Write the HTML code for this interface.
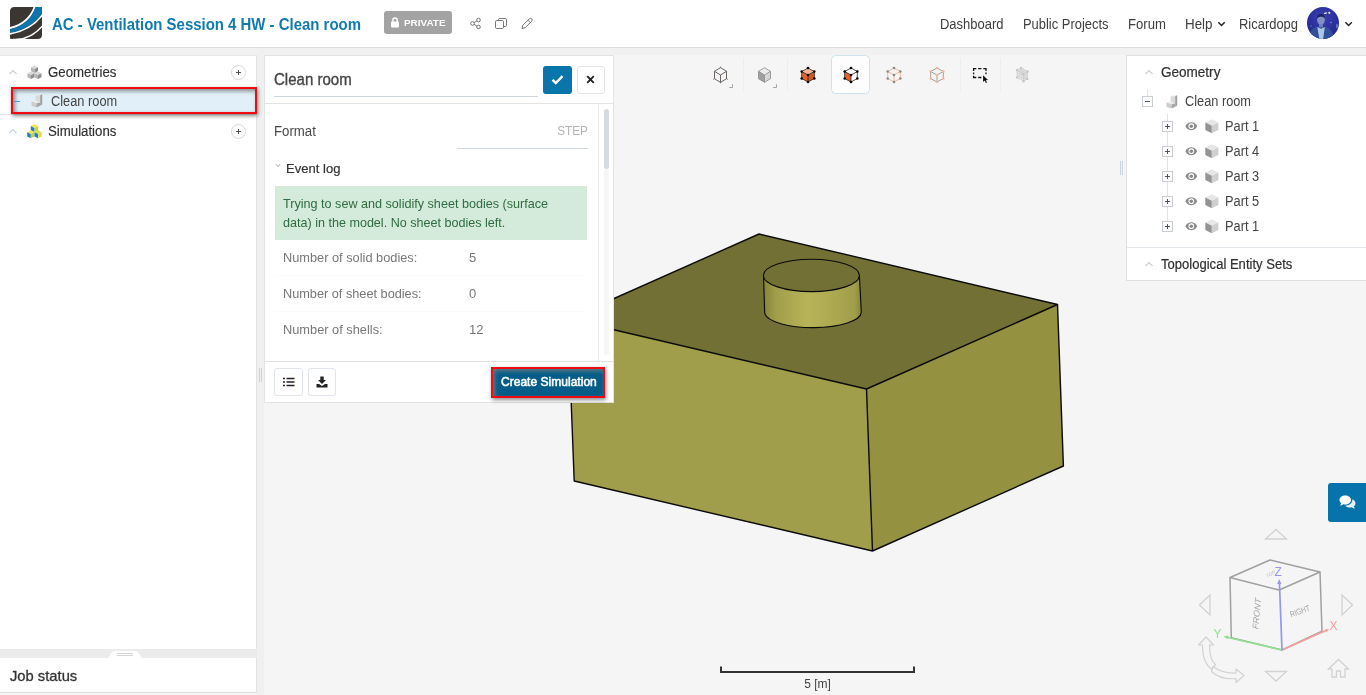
<!DOCTYPE html>
<html>
<head>
<meta charset="utf-8">
<style>
*{box-sizing:border-box;margin:0;padding:0}
html,body{-webkit-font-smoothing:antialiased;width:1366px;height:695px;overflow:hidden;background:#f5f5f5;font-family:"Liberation Sans",sans-serif;color:#3a3a3a}
.abs{position:absolute}
#hdr{position:absolute;left:0;top:0;width:1366px;height:48px;background:#fff;border-bottom:1px solid #dedede}
#title{position:absolute;left:52px;top:14px;font-size:16.200px;font-weight:bold;color:#0f7bb0;white-space:nowrap;line-height:20px}
#priv{position:absolute;left:384px;top:11px;width:68px;height:23px;background:#a3a3a3;border-radius:3px;color:#fff;font-size:9.500px;font-weight:bold;line-height:24px;padding-left:19.500px}
.nav{position:absolute;top:14.500px;font-size:14px;color:#3e3e3e;white-space:nowrap;line-height:18px}
#left{position:absolute;left:0;top:55px;width:257px;height:594px;background:#fff;border-right:1px solid #e2e2e2;border-top:1px solid #e8e8e8}
.t{position:absolute;white-space:nowrap;line-height:18px;display:inline-block}
#job{position:absolute;left:0;top:658px;width:257px;height:34.500px;background:#fff;border-right:1px solid #e2e2e2;border-bottom:1px solid #dcdcdc}
#panel{position:absolute;left:264px;top:55px;width:350px;height:348px;background:#fff;border:1px solid #e3e3e3}
#right{position:absolute;left:1126px;top:55px;width:240px;height:226px;background:#fff;border:1px solid #e0e0e0;border-right:none}
svg{position:absolute;overflow:visible}
.pm{position:absolute;width:11px;height:11px;border:1px solid #c9ced4;background:#fff}
.pm i{position:absolute;background:#555;display:block}
.pm .h{left:2px;top:4px;width:5px;height:1px}
.pm .v{left:4px;top:2px;width:1px;height:5px}
.plus{position:absolute;width:15px;height:15px;border:1px solid #d3d8dd;border-radius:50%;background:#fff}
.plus:before{content:"";position:absolute;left:4px;top:6px;width:5px;height:1px;background:#555}
.plus:after{content:"";position:absolute;left:6px;top:4px;width:1px;height:5px;background:#555}







#title{transform:scaleX(0.9235);transform-origin:left center;display:inline-block}/*cal*/
#tPriv{transform:scaleX(1.0436);transform-origin:left center;display:inline-block}/*cal*/
#nDash{transform:scaleX(0.9270);transform-origin:left center;display:inline-block}/*cal*/
#nPub{transform:scaleX(0.9234);transform-origin:left center;display:inline-block}/*cal*/
#nFor{transform:scaleX(0.9394);transform-origin:left center;display:inline-block}/*cal*/
#nHelp{transform:scaleX(0.9550);transform-origin:left center;display:inline-block}/*cal*/
#nRic{transform:scaleX(0.9244);transform-origin:left center;display:inline-block}/*cal*/
#tGeo{transform:scaleX(0.9453);transform-origin:left center;display:inline-block}/*cal*/
#tCR{transform:scaleX(0.9147);transform-origin:left center;display:inline-block}/*cal*/
#tSim{transform:scaleX(0.9451);transform-origin:left center;display:inline-block}/*cal*/
#tPT{transform:scaleX(0.9395);transform-origin:left center;display:inline-block}/*cal*/
#tFmt{transform:scaleX(0.9449);transform-origin:left center;display:inline-block}/*cal*/
#tStep{transform:scaleX(0.9067);transform-origin:right center;display:inline-block}/*cal*/
#tEv{transform:scaleX(0.9663);transform-origin:left center;display:inline-block}/*cal*/
#tG1{transform:scaleX(0.9697);transform-origin:left center;display:inline-block}/*cal*/
#tG2{transform:scaleX(0.9673);transform-origin:left center;display:inline-block}/*cal*/
#tN1{transform:scaleX(0.9833);transform-origin:left center;display:inline-block}/*cal*/
#tN2{transform:scaleX(0.9785);transform-origin:left center;display:inline-block}/*cal*/
#tN3{transform:scaleX(0.9846);transform-origin:left center;display:inline-block}/*cal*/
#tCS{transform:scaleX(0.9642);transform-origin:left center;display:inline-block}/*cal*/
#tRG{transform:scaleX(0.9663);transform-origin:left center;display:inline-block}/*cal*/
#tRC{transform:scaleX(0.9119);transform-origin:left center;display:inline-block}/*cal*/
#tP0{transform:scaleX(0.9154);transform-origin:left center;display:inline-block}/*cal*/
#tP1{transform:scaleX(0.9154);transform-origin:left center;display:inline-block}/*cal*/
#tP2{transform:scaleX(0.9154);transform-origin:left center;display:inline-block}/*cal*/
#tP3{transform:scaleX(0.9154);transform-origin:left center;display:inline-block}/*cal*/
#tP4{transform:scaleX(0.9154);transform-origin:left center;display:inline-block}/*cal*/
#tRT{transform:scaleX(0.9321);transform-origin:left center;display:inline-block}/*cal*/
#tJob{transform:scaleX(0.9828);transform-origin:left center;display:inline-block}/*cal*/
</style>
</head>
<body>
<div id="root" style="position:absolute;left:0;top:0;width:1366px;height:695px;will-change:transform;transform:translateZ(0)">
<!-- VIEWPORT -->
<svg id="scene" style="left:0;top:0" width="1366" height="695" viewBox="0 0 1366 695">
  <!-- box faces -->
  <polygon points="759,234 1057.5,304.5 866.5,389 568,319" fill="#727034"/>
  <polygon points="568,319 866.5,389 872.5,551 574.2,481" fill="#a09d4b"/>
  <polygon points="866.5,389 1057.5,304.5 1063.4,466 872.5,551" fill="#949241"/>
  <g fill="none" stroke="#0a0a0a" stroke-width="1.4" stroke-linejoin="round">
    <polygon points="759,234 1057.5,304.5 866.5,389 568,319"/>
    <polyline points="568,319 574.2,481 872.5,551 1063.4,466 1057.5,304.5"/>
    <line x1="866.5" y1="389" x2="872.5" y2="551"/>
  </g>
  <!-- cylinder -->
  <defs>
    <linearGradient id="cyl" x1="0" x2="1" y1="0" y2="0">
      <stop offset="0" stop-color="#7f7d37"/><stop offset="0.04" stop-color="#8f8d40"/><stop offset="0.13" stop-color="#a19e4b"/><stop offset="0.3" stop-color="#adaa52"/><stop offset="0.45" stop-color="#b6b358"/><stop offset="0.62" stop-color="#b0ad54"/><stop offset="0.93" stop-color="#a19e4b"/><stop offset="1" stop-color="#88863c"/>
    </linearGradient>
  </defs>
  <path d="M763.500,276 L764.700,313.400 A48.400,15.600 0 0 0 861.300,312.400 L859.400,275.500 Z" fill="url(#cyl)" stroke="#0a0a0a" stroke-width="1.100" stroke-linejoin="round"/>
  <ellipse cx="811.400" cy="275.400" rx="48" ry="16.200" fill="#727034" stroke="#0a0a0a" stroke-width="1.100"/>
  <!-- scale bar -->
  <path d="M721,666.500 V672 H914 V666.500" fill="none" stroke="#333" stroke-width="2"/>
</svg>
<div class="t" id="tScale" style="left:804.200px;top:675px;font-size:12px;color:#444">5 [m]</div>

<svg id="tb" style="left:0;top:0" width="1366" height="110" viewBox="0 0 1366 110">
<rect x="831.500" y="55.500" width="38" height="38" rx="4" fill="#fdfdfd" stroke="#cfe3ee" stroke-width="1"/>
<line x1="743.5" y1="58" x2="743.5" y2="91" stroke="#eeeeee" stroke-width="1"/>
<line x1="787.5" y1="58" x2="787.5" y2="91" stroke="#eeeeee" stroke-width="1"/>
<line x1="960.5" y1="58" x2="960.5" y2="91" stroke="#eeeeee" stroke-width="1"/>
<line x1="1000.5" y1="58" x2="1000.5" y2="91" stroke="#eeeeee" stroke-width="1"/>
<polygon points="720.5,67.6 726.5,71.3 726.5,78.7 720.5,82.4 714.5,78.7 714.5,71.3" fill="none" stroke="#5a5552" stroke-width="0.9"/><path d="M714.5,71.3 L720.5,75 L726.5,71.3 M720.5,75 L720.5,82.4" fill="none" stroke="#5a5552" stroke-width="0.9"/>
<path d="M720.500,66.700 V67.600 M713.300,79.300 L714.500,78.700 M727.700,79.300 L726.500,78.700 M720.500,83.300 V82.400" stroke="#5a5552" stroke-width="0.9" fill="none"/>
<path d="M729.300,87.500 H732.500 V84.300" fill="none" stroke="#9a9a9a" stroke-width="0.9"/>
<polygon points="764.5,67.7 770.5,71.3 764.5,75.0 758.5,71.3" fill="#ececec"/><polygon points="758.5,71.3 764.5,75.0 764.5,82.3 758.5,78.7" fill="#9f9f9f"/><polygon points="770.5,71.3 770.5,78.7 764.5,82.3 764.5,75.0" fill="#d6d6d6"/><polygon points="764.5,67.7 770.5,71.3 770.5,78.7 764.5,82.3 758.5,78.7 758.5,71.3" fill="none" stroke="#8a8a8a" stroke-width="0.8"/><path d="M758.5,71.3 L764.5,75 L770.5,71.3 M764.5,75 L764.5,82.3" fill="none" stroke="#8a8a8a" stroke-width="0.8"/>
<path d="M773.200,87.500 H776.500 V84.300" fill="none" stroke="#9a9a9a" stroke-width="0.9"/>
<polygon points="808.0,68.0 814.3,71.5 808.0,75.0 801.7,71.5" fill="#f6b899"/><polygon points="801.7,71.5 808.0,75.0 808.0,82.0 801.7,78.5" fill="#e6622a"/><polygon points="814.3,71.5 814.3,78.5 808.0,82.0 808.0,75.0" fill="#d9571f"/><polygon points="808.0,68.0 814.3,71.5 814.3,78.5 808.0,82.0 801.7,78.5 801.7,71.5" fill="none" stroke="#222" stroke-width="0.8"/><path d="M801.7,71.5 L808,75 L814.3,71.5 M808,75 L808.0,82.0" fill="none" stroke="#222" stroke-width="0.8"/><circle cx="808.0" cy="68.0" r="1.3" fill="#000"/><circle cx="814.3" cy="71.5" r="1.3" fill="#000"/><circle cx="814.3" cy="78.5" r="1.3" fill="#000"/><circle cx="808.0" cy="82.0" r="1.3" fill="#000"/><circle cx="801.7" cy="78.5" r="1.3" fill="#000"/><circle cx="801.7" cy="71.5" r="1.3" fill="#000"/><circle cx="808.0" cy="75.0" r="1.3" fill="#000"/>
<polygon points="851.0,68.0 857.3,71.5 851.0,75.0 844.7,71.5" fill="#fff"/><polygon points="844.7,71.5 851.0,75.0 851.0,82.0 844.7,78.5" fill="#e6622a"/><polygon points="857.3,71.5 857.3,78.5 851.0,82.0 851.0,75.0" fill="#fff"/><polygon points="851.0,68.0 857.3,71.5 857.3,78.5 851.0,82.0 844.7,78.5 844.7,71.5" fill="none" stroke="#222" stroke-width="0.8"/><path d="M844.7,71.5 L851,75 L857.3,71.5 M851,75 L851.0,82.0" fill="none" stroke="#222" stroke-width="0.8"/><circle cx="851.0" cy="68.0" r="1.3" fill="#000"/><circle cx="857.3" cy="71.5" r="1.3" fill="#000"/><circle cx="857.3" cy="78.5" r="1.3" fill="#000"/><circle cx="851.0" cy="82.0" r="1.3" fill="#000"/><circle cx="844.7" cy="78.5" r="1.3" fill="#000"/><circle cx="844.7" cy="71.5" r="1.3" fill="#000"/><circle cx="851.0" cy="75.0" r="1.3" fill="#000"/>
<polygon points="894.0,68.0 900.3,71.5 900.3,78.5 894.0,82.0 887.7,78.5 887.7,71.5" fill="none" stroke="#f0a988" stroke-width="0.8"/><path d="M887.7,71.5 L894,75 L900.3,71.5 M894,75 L894.0,82.0" fill="none" stroke="#f0a988" stroke-width="0.8"/><circle cx="894.0" cy="68.0" r="1.3" fill="#8a8a8a"/><circle cx="900.3" cy="71.5" r="1.3" fill="#8a8a8a"/><circle cx="900.3" cy="78.5" r="1.3" fill="#8a8a8a"/><circle cx="894.0" cy="82.0" r="1.3" fill="#8a8a8a"/><circle cx="887.7" cy="78.5" r="1.3" fill="#8a8a8a"/><circle cx="887.7" cy="71.5" r="1.3" fill="#8a8a8a"/><circle cx="894.0" cy="75.0" r="1.3" fill="#8a8a8a"/>
<polygon points="937.0,68.0 943.3,71.5 943.3,78.5 937.0,82.0 930.7,78.5 930.7,71.5" fill="none" stroke="#8a8a8a" stroke-width="0.8"/><path d="M930.7,71.5 L937,75 L943.3,71.5 M937,75 L937.0,82.0" fill="none" stroke="#8a8a8a" stroke-width="0.8"/><circle cx="937.0" cy="68.0" r="1.3" fill="#f6b899"/><circle cx="943.3" cy="71.5" r="1.3" fill="#f6b899"/><circle cx="943.3" cy="78.5" r="1.3" fill="#f6b899"/><circle cx="937.0" cy="82.0" r="1.3" fill="#f6b899"/><circle cx="930.7" cy="78.5" r="1.3" fill="#f6b899"/><circle cx="930.7" cy="71.5" r="1.3" fill="#f6b899"/><circle cx="937.0" cy="75.0" r="1.3" fill="#f6b899"/>
<path d="M973.600,71 V68.700 H976.300 M978.200,68.700 H981.400 M983.300,68.700 H986 V71 M986,72.600 V74.300 M973.600,72.500 V74.300 M973.600,75.700 V77.500 H976.300 M978.200,77.500 H981.400" fill="none" stroke="#111" stroke-width="1.300"/>
<path d="M983.100,75.200 V82 L984.700,80.600 L985.900,83.100 L987,82.600 L985.800,80.200 L988,80Z" fill="#111"/>
<path d="M1021.1,68.0 L1017.0,70.2 M1021.1,68.0 L1027.6,71.5 M1023.3,69.2 L1019.1,71.4 M1019.7,68.7 L1026.1,72.3 M1025.4,70.3 L1021.1,72.7 M1018.4,69.5 L1024.7,73.1 M1027.6,71.5 L1023.2,73.9 M1017.0,70.2 L1023.2,73.9 M1017.0,70.2 L1017.1,77.4 M1017.0,70.2 L1023.2,73.9 M1019.1,71.4 L1019.2,78.7 M1017.0,72.6 L1023.3,76.3 M1021.1,72.7 L1021.4,79.9 M1017.1,75.0 L1023.4,78.8 M1023.2,73.9 L1023.5,81.2 M1017.1,77.4 L1023.5,81.2 M1023.2,73.9 L1023.5,81.2 M1023.2,73.9 L1027.6,71.5 M1024.7,73.1 L1024.8,80.4 M1023.3,76.3 L1027.5,74.0 M1026.1,72.3 L1026.0,79.7 M1023.4,78.8 L1027.4,76.4 M1027.6,71.5 L1027.3,78.9 M1023.5,81.2 L1027.3,78.9 " fill="none" stroke="#c6c6c6" stroke-width="0.700"/>
<g fill="#c6c6c6"><circle cx="1021.1" cy="68" r="1.200"/><circle cx="1017" cy="70.2" r="1.200"/><circle cx="1027.6" cy="71.5" r="1.200"/><circle cx="1023.2" cy="73.9" r="1.200"/><circle cx="1017.1" cy="77.4" r="1.200"/><circle cx="1027.3" cy="78.9" r="1.200"/><circle cx="1023.5" cy="81.2" r="1.200"/></g>
</svg>
<svg id="navc" style="left:0;top:0" width="1366" height="695" viewBox="0 0 1366 695">
  <g fill="none" stroke="#d2d2d2" stroke-width="1.3" stroke-linejoin="miter">
    <polygon points="1265.500,539 1276,529.500 1286.500,539"/>
    <polygon points="1265.500,671.500 1286.500,671.500 1276,681"/>
    <polygon points="1210,595 1210,615 1199.500,605"/>
    <polygon points="1342,595 1342,615 1352.500,605"/>
  </g>
  <g fill="none" stroke="#a0a0a0" stroke-width="1.500" stroke-linejoin="round">
    <polygon points="1270,560 1320,572 1279.200,590 1230,577.500"/>
    <polyline points="1230,577.500 1231.300,637.800 1282,650 1322,631.300 1320,572"/>
  </g>
  <g font-family="Liberation Sans, sans-serif" font-style="italic" font-size="8.500" fill="#a4a4a4">
    <text transform="translate(1258.300,629.500) rotate(-85) skewX(-4)" textLength="31" lengthAdjust="spacingAndGlyphs">FRONT</text>
    <text transform="translate(1291.500,617.300) rotate(-20) skewX(8)" textLength="20.500" lengthAdjust="spacingAndGlyphs" font-size="8.500">RIGHT</text>
    <text transform="translate(1267,578) rotate(-28)" font-size="5" fill="#c4c4c4">TOP</text>
  </g>
  <line x1="1282" y1="650" x2="1226" y2="637" stroke="#8fe08f" stroke-width="1.600"/>
  <polygon points="1223.500,636.300 1228.500,635.500 1227.600,639.200" fill="#8fe08f"/>
  <line x1="1282" y1="650" x2="1326" y2="630.500" stroke="#f5a0a0" stroke-width="1.600"/>
  <polygon points="1329,629.200 1325,629 1326.500,632.500" fill="#f5a0a0"/>
  <line x1="1282" y1="650" x2="1279.400" y2="582" stroke="#9595f5" stroke-width="1.700"/>
  <polygon points="1279.200,579 1277.200,584 1281.400,584" fill="#9595f5"/>
  <g font-family="Liberation Sans, sans-serif" font-size="12">
    <text x="1274.500" y="575.500" fill="#9595f5">Z</text>
    <text x="1213.500" y="637.500" fill="#8fe08f">Y</text>
    <text x="1329.500" y="630" fill="#f5a0a0">X</text>
  </g>
  <!-- rotate arrows -->
  <g fill="none" stroke="#d2d2d2" stroke-width="1.200" stroke-linejoin="round">
    <path d="M1198.500,645 L1206,637 L1213.500,645 L1209.500,645 C1209.500,654 1211,661 1215.500,664.500 L1211.500,669 C1205,664.500 1202.500,656 1202.500,645Z"/>
    <path d="M1213,666.500 C1219,671 1227,673.500 1236,673 L1236,669 L1244,675.500 L1236,682.500 L1236,678.500 C1226,679.500 1217,676.500 1211.500,671.500Z"/>
  </g>
  <!-- home -->
  <g fill="none" stroke="#d2d2d2" stroke-width="1.300" stroke-linejoin="miter">
    <path d="M1328.500,669 L1338.500,659.500 L1348.500,669 L1345,669 L1345,677 L1340.500,677 L1340.500,671 L1336.500,671 L1336.500,677 L1332,677 L1332,669Z"/>
  </g>
</svg>
<div class="abs" style="left:1328px;top:483px;width:38px;height:39px;background:#0674aa;border-radius:3px 0 0 3px"></div>
<svg style="left:1339px;top:495px" width="17" height="14" viewBox="0 0 17 14">
  <path d="M6.200,0.500 C9.400,0.500 12,2.500 12,5 C12,7.500 9.400,9.500 6.200,9.500 C5.500,9.500 4.900,9.400 4.300,9.300 C3.300,10.100 2,10.500 0.800,10.500 C1.600,9.800 2,9 2.100,8.200 C1.100,7.400 0.500,6.200 0.500,5 C0.500,2.500 3,0.500 6.200,0.500Z" fill="#fff"/>
  <path d="M13.200,4.300 C15.200,5 16.500,6.500 16.500,8.200 C16.500,9.400 15.900,10.500 14.900,11.300 C15,12.100 15.400,12.800 16.200,13.500 C15,13.500 13.700,13.100 12.700,12.300 C12.100,12.500 11.500,12.500 10.800,12.500 C8.900,12.500 7.200,11.800 6.200,10.700 C10,10.700 13.300,8.300 13.300,5 C13.300,4.800 13.300,4.500 13.200,4.300Z" fill="#e6f0f6"/>
</svg>
<div class="abs" style="left:0;top:48px;width:1366px;height:7px;background:#f1f1f1"></div>
<div class="abs" style="left:257px;top:48px;width:7px;height:647px;background:#f0f0f0"></div>
<!-- HEADER -->
<div id="hdr">
  <div id="title">AC - Ventilation Session 4 HW - Clean room</div>
  <div id="priv"><span id="tPriv">PRIVATE</span></div>
  <div class="nav" id="nDash" style="left:940px">Dashboard</div>
  <div class="nav" id="nPub" style="left:1023px">Public Projects</div>
  <div class="nav" id="nFor" style="left:1127.500px">Forum</div>
  <div class="nav" id="nHelp" style="left:1185px">Help</div>
  <div class="nav" id="nRic" style="left:1239px">Ricardopg</div>
  <svg style="left:0;top:0" width="1366" height="48" viewBox="0 0 1366 48">
    <!-- logo -->
    <defs><clipPath id="lg"><path d="M14.500,7 H41 Q42,7 42,8 V34.500 Q42,39 37.500,39 H11 Q10,39 10,38 V11.500 Q10,7 14.500,7Z"/></clipPath></defs>
    <g clip-path="url(#lg)"><g transform="translate(10,7)">
      <rect x="0" y="0" width="32" height="32" fill="#3b3632"/>
      <path d="M0,21.100 Q19,16.500 24.800,-0.500" fill="none" stroke="#fff" stroke-width="2"/>
      <path d="M0,22.400 Q19.500,17.500 25.500,0 L32,0 L32,6.600 Q20.600,22.300 0,26Z" fill="#0c75ad"/>
      <path d="M-0.500,27 Q21,23.400 32.500,7.800" fill="none" stroke="#fff" stroke-width="1.700"/>
      <path d="M3,32.400 Q20,33.500 32.500,19" fill="none" stroke="#fff" stroke-width="1.400"/>
    </g></g>
    <!-- lock -->
    <rect x="391" y="21.600" width="8" height="5.800" rx="0.800" fill="#fff"/>
    <path d="M392.800,22 V20.200 A2.200,2.200 0 0 1 397.200,20.200 V22" fill="none" stroke="#fff" stroke-width="1.400"/>
    <!-- share -->
    <g fill="none" stroke="#666" stroke-width="0.9"><circle cx="472.500" cy="23.500" r="1.800"/><circle cx="478.500" cy="20" r="1.800"/><circle cx="478.500" cy="27" r="1.800"/><path d="M474.100,22.600 L476.900,20.900 M474.100,24.400 L476.900,26.100"/></g>
    <!-- copy -->
    <g fill="#fff" stroke="#666" stroke-width="0.9"><rect x="498.500" y="18.500" width="8" height="8" rx="1.200"/><rect x="495.500" y="20.500" width="8" height="8" rx="1.200"/></g>
    <!-- pencil -->
    <g fill="none" stroke="#666" stroke-width="0.9"><path d="M522,28.500 L522.800,25.300 L529.300,18.800 A1.200,1.200 0 0 1 531.700,21.200 L525.200,27.700Z"/><path d="M528,20.200 L530.300,22.500"/></g>
    <!-- carets -->
    <path d="M1218.300,22.300 L1221.500,25.500 L1224.700,22.300" fill="none" stroke="#222" stroke-width="1.500"/>
    <path d="M1345.400,22.300 L1348.600,25.500 L1351.800,22.300" fill="none" stroke="#222" stroke-width="1.500"/>
    <!-- avatar -->
    <defs><clipPath id="av"><circle cx="1323" cy="23" r="16"/></clipPath>
    <radialGradient id="avg" cx="0.5" cy="0.35" r="0.75"><stop offset="0" stop-color="#3a3fb2"/><stop offset="0.55" stop-color="#2a2e9c"/><stop offset="1" stop-color="#1d2085"/></radialGradient>
    <filter id="avb" x="-10%" y="-10%" width="120%" height="120%"><feGaussianBlur stdDeviation="0.55"/></filter></defs>
    <g clip-path="url(#av)">
      <rect x="1305" y="5" width="36" height="36" fill="url(#avg)"/>
      <g filter="url(#avb)">
        <path d="M1308,41 C1308.500,32 1312,28.500 1317,26.500 L1321,29 L1325,26.500 C1330,28 1333.500,31.500 1334,41Z" fill="#33509a"/>
        <path d="M1317.300,27 L1319.500,40 L1323,40 L1324.800,27 L1321,28.800Z" fill="#a9c6e2"/>
        <rect x="1319" y="22.500" width="4" height="5" fill="#6d7db4"/>
        <ellipse cx="1321" cy="19.700" rx="3.900" ry="4.900" fill="#8090c2"/>
        <path d="M1316.900,18.500 C1316.500,12.500 1325.300,12.500 1325,18.500 C1323.500,16.300 1318.500,16.300 1316.900,18.500Z" fill="#1d2060"/>
        <circle cx="1329.300" cy="12.800" r="1.100" fill="#f4e69a"/>
        <ellipse cx="1325.500" cy="13.200" rx="1.600" ry="0.700" transform="rotate(-20 1325.500 13.200)" fill="#e8ecff"/>
        <circle cx="1331" cy="22.500" r="0.800" fill="#7d86d0"/>
        <ellipse cx="1337" cy="26" rx="0.800" ry="2.500" fill="#6f86c8"/>
        <circle cx="1311" cy="26" r="1" fill="#4850b0"/>
      </g>
    </g>
  </svg>
</div>
<div id="left">
  <!-- Geometries row -->
  <svg style="left:8px;top:12px" width="10" height="8" viewBox="0 0 10 8"><path d="M1.5,6 L5,2.5 L8.5,6" fill="none" stroke="#c9d2db" stroke-width="1.2"/></svg>
  <svg style="left:27px;top:9px" width="15" height="15" viewBox="0 0 15 15">
    <g stroke="none">
      <path d="M7.5,0.5 L11,2.2 L7.5,4 L4,2.2Z" fill="#d9d9d9"/><path d="M4,2.2 L7.5,4 V8 L4,6.2Z" fill="#b5b5b5"/><path d="M11,2.2 L7.5,4 V8 L11,6.2Z" fill="#8f8f8f"/>
      <path d="M4,6.5 L7.5,8.2 L4,10 L0.5,8.2Z" fill="#d9d9d9"/><path d="M0.5,8.2 L4,10 V14 L0.5,12.2Z" fill="#b5b5b5"/><path d="M7.5,8.2 L4,10 V14 L7.5,12.2Z" fill="#8f8f8f"/>
      <path d="M11,6.5 L14.5,8.2 L11,10 L7.5,8.2Z" fill="#d9d9d9"/><path d="M7.5,8.2 L11,10 V14 L7.5,12.2Z" fill="#b5b5b5"/><path d="M14.500,8.2 L11,10 V14 L14.5,12.2Z" fill="#8f8f8f"/>
    </g></svg>
  <div class="t" id="tGeo" style="left:48px;top:7px;font-size:14px;color:#2f2f2f;-webkit-text-stroke:0.15px #2f2f2f">Geometries</div>
  <div class="plus" style="left:230.500px;top:8.500px"></div>
  <!-- Clean room row -->
  <div class="abs" style="left:0;top:58px;width:257px;height:1px;background:#e6e6e6"></div>
  <div class="abs" style="left:11px;top:31px;width:246px;height:27px;border:2px solid #f00a12;background:#e1f0f8;box-shadow:1px 2px 4px rgba(0,0,0,.45), inset 2px 2px 4px rgba(90,90,90,.7)"></div>
  <div class="abs" style="left:14px;top:45px;width:6px;height:1px;background:#3aa6dd"></div>
  <svg style="left:31px;top:38px" width="13" height="14" viewBox="0 0 13 14">
    <path d="M4.600,1.300 L6.600,0.300 L11.200,0.300 L9.200,1.200Z" fill="#f0f0f0"/>
    <path d="M4.600,1.300 L9.200,1.200 V8.600 L4.600,8.600Z" fill="#dadada"/>
    <path d="M9.200,1.200 L11.200,0.300 V10.600 L9.200,11.800Z" fill="#9d9d9d"/>
    <path d="M0.500,7.400 L4.600,6.200 L9.200,8.400 L5.500,9.200Z" fill="#ebebeb"/>
    <path d="M0.500,7.400 L5.500,9.200 V13.600 L0.500,11.900Z" fill="#cdcdcd"/>
    <path d="M5.500,9.200 L9.200,8.400 V11.800 L5.500,13.600Z" fill="#a6a6a6"/>
  </svg>
  <div class="t" id="tCR" style="left:51px;top:36px;font-size:14px;color:#444">Clean room</div>
  <!-- Simulations row -->
  <svg style="left:8px;top:71px" width="10" height="8" viewBox="0 0 10 8"><path d="M1.5,6 L5,2.500 L8.500,6" fill="none" stroke="#c9d2db" stroke-width="1.2"/></svg>
  <svg style="left:27px;top:68px" width="15" height="15" viewBox="0 0 15 15">
    <g stroke="none">
      <path d="M7.5,0.3 L11.200,2.100 L7.5,4 L3.800,2.100Z" fill="#f3e552"/><path d="M3.800,2.100 L7.5,4 V8 L3.800,6.200Z" fill="#1e80c2"/><path d="M11.200,2.100 L7.5,4 V8 L11.200,6.200Z" fill="#bfd24a"/>
      <path d="M3.800,6.300 L7.500,8.200 L3.800,10 L0.200,8.200Z" fill="#f3e552"/><path d="M0.200,8.200 L3.800,10 V14.200 L0.200,12.400Z" fill="#1e80c2"/><path d="M7.500,8.200 L3.800,10 V14.200 L7.500,12.400Z" fill="#bfd24a"/>
      <path d="M11.200,6.300 L14.800,8.200 L11.200,10 L7.500,8.200Z" fill="#d9e04c"/><path d="M7.500,8.200 L11.200,10 V14.200 L7.500,12.400Z" fill="#1e80c2"/><path d="M14.800,8.200 L11.200,10 V14.200 L14.800,12.400Z" fill="#e6dc4a"/>
    </g></svg>
  <div class="t" id="tSim" style="left:48px;top:66px;font-size:14px;color:#2f2f2f;-webkit-text-stroke:0.15px #2f2f2f">Simulations</div>
  <div class="plus" style="left:230.500px;top:67.500px"></div>
</div>
<div class="abs" style="left:0;top:649px;width:257px;height:9px;background:#ebebeb"></div>
<svg style="left:108px;top:649px" width="34" height="9" viewBox="0 0 34 9"><path d="M0,9 L5,2 H29 L34,9Z" fill="#fff"/><path d="M9,4.500 H25 M9,6.500 H25" stroke="#c9c9c9" stroke-width="0.8" fill="none"/></svg>
<div id="job"><div class="t" id="tJob" style="left:10.300px;top:8.500px;font-size:15px;color:#333;-webkit-text-stroke:0.3px #333">Job status</div></div>
<div id="panel">
  <div class="t" id="tPT" style="left:9px;top:15px;font-size:16px;color:#454545;-webkit-text-stroke:0.35px #454545">Clean room</div>
  <div class="abs" style="left:9px;top:40px;width:264px;height:1px;background:#cdd5dd"></div>
  <div class="abs" style="left:278px;top:10px;width:29px;height:28px;background:#0975ab;border-radius:3px"></div>
  <svg style="left:286px;top:18px" width="13" height="11" viewBox="0 0 13 11"><path d="M1.500,5.800 L4.800,9 L11.500,2.200" fill="none" stroke="#fff" stroke-width="2.4" stroke-linecap="butt"/></svg>
  <div class="abs" style="left:312px;top:10px;width:28px;height:28px;background:#fff;border:1px solid #e2e6ea;border-radius:3px"></div>
  <svg style="left:321.300px;top:19.300px" width="9" height="9" viewBox="0 0 9 9"><path d="M1.200,1.200 L7.800,7.800 M7.800,1.200 L1.200,7.800" stroke="#222" stroke-width="1.9" fill="none"/></svg>
  <div class="abs" style="left:0;top:47px;width:348px;height:1px;background:#e4e4e4"></div>
  <div class="abs" style="left:332.500px;top:48px;width:1px;height:257px;background:#e9e9e9"></div>
  <div class="abs" style="left:339px;top:53px;width:5px;height:60px;background:#d6dbe2;border-radius:3px"></div>
  <div class="abs" style="left:339px;top:113px;width:5px;height:186px;background:#f6f6f7;border-radius:3px"></div>
  <div class="t" id="tFmt" style="left:9px;top:66px;font-size:14px;color:#484848">Format</div>
  <div class="t" id="tStep" style="right:25px;top:66px;font-size:13px;color:#b3b3b3">STEP</div>
  <div class="abs" style="left:192px;top:92px;width:131px;height:1px;background:#cdd5dd"></div>
  <svg style="left:10px;top:107px" width="6" height="5" viewBox="0 0 6 5"><path d="M0.800,1 L3,3.600 L5.200,1" fill="none" stroke="#aaa" stroke-width="1"/></svg>
  <div class="t" id="tEv" style="left:21.300px;top:103.500px;font-size:13.5px;color:#333;-webkit-text-stroke:0.2px #333">Event log</div>
  <div class="abs" style="left:10px;top:130px;width:312px;height:54px;background:#d4eadb"></div>
  <div class="t" id="tG1" style="left:18px;top:138.500px;font-size:13px;color:#2f6c40">Trying to sew and solidify sheet bodies (surface</div>
  <div class="t" id="tG2" style="left:18px;top:157.500px;font-size:13px;color:#2f6c40">data) in the model. No sheet bodies left.</div>
  <div class="t" id="tN1" style="left:18px;top:193px;font-size:13px;color:#777">Number of solid bodies:</div>
  <div class="t" style="left:204px;top:193px;font-size:13px;color:#777">5</div>
  <div class="abs" style="left:10px;top:219px;width:312px;height:1px;background:#fbfbfb"></div>
  <div class="t" id="tN2" style="left:18px;top:229px;font-size:13px;color:#777">Number of sheet bodies:</div>
  <div class="t" style="left:204px;top:229px;font-size:13px;color:#777">0</div>
  <div class="abs" style="left:10px;top:255px;width:312px;height:1px;background:#fbfbfb"></div>
  <div class="t" id="tN3" style="left:18px;top:265px;font-size:13px;color:#777">Number of shells:</div>
  <div class="t" style="left:204px;top:265px;font-size:13px;color:#777">12</div>
  <div class="abs" style="left:0;top:305px;width:348px;height:1px;background:#e2e2e2"></div>
  <div class="abs" style="left:9px;top:312px;width:29px;height:28px;background:#fff;border:1px solid #e0e5eb;border-radius:3px"></div>
  <svg style="left:18px;top:321px" width="12" height="10" viewBox="0 0 12 10"><path d="M0,1.500 H2 M3.500,1.500 H11.500 M0,5 H2 M3.500,5 H11.500 M0,8.500 H2 M3.500,8.500 H11.500" stroke="#222" stroke-width="1.600" fill="none"/></svg>
  <div class="abs" style="left:43px;top:312px;width:28px;height:28px;background:#fff;border:1px solid #e0e5eb;border-radius:3px"></div>
  <svg style="left:51px;top:320px" width="12" height="12" viewBox="0 0 12 12"><path d="M4.300,0.500 H7.700 V4 H10 L6,8 L2,4 H4.300Z" fill="#222"/><path d="M0.500,8 H3 L6,10 L9,8 H11.500 V11.500 H0.500Z" fill="#222"/></svg>
  <div class="abs" style="left:226px;top:311px;width:114px;height:31px;border:2px solid #f00a12;background:#045d88;box-shadow:1px 2px 4px rgba(0,0,0,.45), inset 2px 2px 4px rgba(130,130,130,.75)"></div>
  <div class="t" id="tCS" style="left:236px;top:317px;font-size:12.500px;font-weight:normal;color:#fff;-webkit-text-stroke:0.550px #fff">Create Simulation</div>
</div>
<div class="abs" style="left:259px;top:368px;width:3px;height:14px;border-left:1px solid #c9d3df;border-right:1px solid #c9d3df"></div>
<div class="abs" style="left:1120px;top:161px;width:3px;height:14px;border-left:1px solid #c9d3df;border-right:1px solid #c9d3df"></div>
<div id="right">
  <svg style="left:17px;top:12px" width="10" height="8" viewBox="0 0 10 8"><path d="M1.500,6 L5,2.500 L8.500,6" fill="none" stroke="#c9d2db" stroke-width="1.2"/></svg>
  <div class="t" id="tRG" style="left:34px;top:7px;font-size:14px;color:#2f2f2f;-webkit-text-stroke:0.2px #2f2f2f">Geometry</div>
  <div class="abs" style="left:20px;top:33px;width:1px;height:7px;background:#e2e2e2"></div>
  <div class="abs" style="left:40px;top:58px;width:1px;height:113px;background:#e2e2e2"></div>
  <div class="pm" style="left:15px;top:39.500px"><i class="h"></i></div>
  <svg style="left:39px;top:39px" width="13" height="14" viewBox="0 0 13 14">
    <path d="M4.600,1.300 L6.600,0.300 L11.200,0.300 L9.200,1.200Z" fill="#f0f0f0"/>
    <path d="M4.600,1.300 L9.200,1.200 V8.600 L4.600,8.600Z" fill="#dadada"/>
    <path d="M9.200,1.200 L11.200,0.300 V10.600 L9.200,11.800Z" fill="#9d9d9d"/>
    <path d="M0.500,7.400 L4.600,6.200 L9.200,8.400 L5.500,9.200Z" fill="#ebebeb"/>
    <path d="M0.500,7.400 L5.500,9.200 V13.600 L0.500,11.900Z" fill="#cdcdcd"/>
    <path d="M5.500,9.200 L9.200,8.400 V11.800 L5.500,13.600Z" fill="#a6a6a6"/>
  </svg>
  <div class="t" id="tRC" style="left:58px;top:36px;font-size:14px;color:#444">Clean room</div>
  <div class="pm" style="left:35px;top:65.0px"><i class="h"></i><i class="v"></i></div>
  <svg style="left:57.500px;top:66.3px" width="12.600" height="8.400" viewBox="0 0 12 8"><path d="M0.300,4 C2,1 4,0.200 6,0.200 C8,0.200 10,1 11.700,4 C10,7 8,7.800 6,7.800 C4,7.800 2,7 0.300,4Z" fill="#8a8a8a"/><circle cx="6" cy="4" r="2.700" fill="#fff"/><circle cx="6" cy="4" r="1.700" fill="#8a8a8a"/></svg>
  <svg style="left:77.500px;top:62.5px" width="13.700" height="14.700" viewBox="0 0 13 14"><path d="M6.500,0.300 L12.700,3.300 L6.500,6.500 L0.300,3.300Z" fill="#e6e6e6"/><path d="M0.300,3.300 L6.500,6.500 V13.700 L0.300,10.500Z" fill="#939393"/><path d="M12.700,3.300 L6.500,6.500 V13.700 L12.700,10.500Z" fill="#cfcfcf"/></svg>
  <div class="t" id="tP0" style="left:98px;top:60.5px;font-size:14px;color:#444">Part 1</div>
  <div class="pm" style="left:35px;top:90.0px"><i class="h"></i><i class="v"></i></div>
  <svg style="left:57.500px;top:91.3px" width="12.600" height="8.400" viewBox="0 0 12 8"><path d="M0.300,4 C2,1 4,0.200 6,0.200 C8,0.200 10,1 11.700,4 C10,7 8,7.800 6,7.800 C4,7.800 2,7 0.300,4Z" fill="#8a8a8a"/><circle cx="6" cy="4" r="2.700" fill="#fff"/><circle cx="6" cy="4" r="1.700" fill="#8a8a8a"/></svg>
  <svg style="left:77.500px;top:87.5px" width="13.700" height="14.700" viewBox="0 0 13 14"><path d="M6.500,0.300 L12.700,3.300 L6.500,6.500 L0.300,3.300Z" fill="#e6e6e6"/><path d="M0.300,3.300 L6.500,6.500 V13.700 L0.300,10.500Z" fill="#939393"/><path d="M12.700,3.300 L6.500,6.500 V13.700 L12.700,10.500Z" fill="#cfcfcf"/></svg>
  <div class="t" id="tP1" style="left:98px;top:85.5px;font-size:14px;color:#444">Part 4</div>
  <div class="pm" style="left:35px;top:115.0px"><i class="h"></i><i class="v"></i></div>
  <svg style="left:57.500px;top:116.3px" width="12.600" height="8.400" viewBox="0 0 12 8"><path d="M0.300,4 C2,1 4,0.200 6,0.200 C8,0.200 10,1 11.700,4 C10,7 8,7.800 6,7.800 C4,7.800 2,7 0.300,4Z" fill="#8a8a8a"/><circle cx="6" cy="4" r="2.700" fill="#fff"/><circle cx="6" cy="4" r="1.700" fill="#8a8a8a"/></svg>
  <svg style="left:77.500px;top:112.5px" width="13.700" height="14.700" viewBox="0 0 13 14"><path d="M6.500,0.300 L12.700,3.300 L6.500,6.500 L0.300,3.300Z" fill="#e6e6e6"/><path d="M0.300,3.300 L6.500,6.500 V13.700 L0.300,10.500Z" fill="#939393"/><path d="M12.700,3.300 L6.500,6.500 V13.700 L12.700,10.500Z" fill="#cfcfcf"/></svg>
  <div class="t" id="tP2" style="left:98px;top:110.5px;font-size:14px;color:#444">Part 3</div>
  <div class="pm" style="left:35px;top:140.0px"><i class="h"></i><i class="v"></i></div>
  <svg style="left:57.500px;top:141.3px" width="12.600" height="8.400" viewBox="0 0 12 8"><path d="M0.300,4 C2,1 4,0.200 6,0.200 C8,0.200 10,1 11.700,4 C10,7 8,7.800 6,7.800 C4,7.800 2,7 0.300,4Z" fill="#8a8a8a"/><circle cx="6" cy="4" r="2.700" fill="#fff"/><circle cx="6" cy="4" r="1.700" fill="#8a8a8a"/></svg>
  <svg style="left:77.500px;top:137.5px" width="13.700" height="14.700" viewBox="0 0 13 14"><path d="M6.500,0.300 L12.700,3.300 L6.500,6.500 L0.300,3.300Z" fill="#e6e6e6"/><path d="M0.300,3.300 L6.500,6.500 V13.700 L0.300,10.500Z" fill="#939393"/><path d="M12.700,3.300 L6.500,6.500 V13.700 L12.700,10.500Z" fill="#cfcfcf"/></svg>
  <div class="t" id="tP3" style="left:98px;top:135.5px;font-size:14px;color:#444">Part 5</div>
  <div class="pm" style="left:35px;top:165.0px"><i class="h"></i><i class="v"></i></div>
  <svg style="left:57.500px;top:166.3px" width="12.600" height="8.400" viewBox="0 0 12 8"><path d="M0.300,4 C2,1 4,0.200 6,0.200 C8,0.200 10,1 11.700,4 C10,7 8,7.800 6,7.800 C4,7.800 2,7 0.300,4Z" fill="#8a8a8a"/><circle cx="6" cy="4" r="2.700" fill="#fff"/><circle cx="6" cy="4" r="1.700" fill="#8a8a8a"/></svg>
  <svg style="left:77.500px;top:162.5px" width="13.700" height="14.700" viewBox="0 0 13 14"><path d="M6.500,0.300 L12.700,3.300 L6.500,6.500 L0.300,3.300Z" fill="#e6e6e6"/><path d="M0.300,3.300 L6.500,6.500 V13.700 L0.300,10.500Z" fill="#939393"/><path d="M12.700,3.300 L6.500,6.500 V13.700 L12.700,10.500Z" fill="#cfcfcf"/></svg>
  <div class="t" id="tP4" style="left:98px;top:160.5px;font-size:14px;color:#444">Part 1</div>
  <div class="abs" style="left:0;top:191px;width:240px;height:1px;background:#e3e8ec"></div>
  <svg style="left:17px;top:204px" width="10" height="8" viewBox="0 0 10 8"><path d="M1.500,6 L5,2.500 L8.500,6" fill="none" stroke="#c9d2db" stroke-width="1.2"/></svg>
  <div class="t" id="tRT" style="left:34px;top:199px;font-size:14px;color:#2f2f2f;-webkit-text-stroke:0.2px #2f2f2f">Topological Entity Sets</div>
</div>
</div>
</body>
</html>
